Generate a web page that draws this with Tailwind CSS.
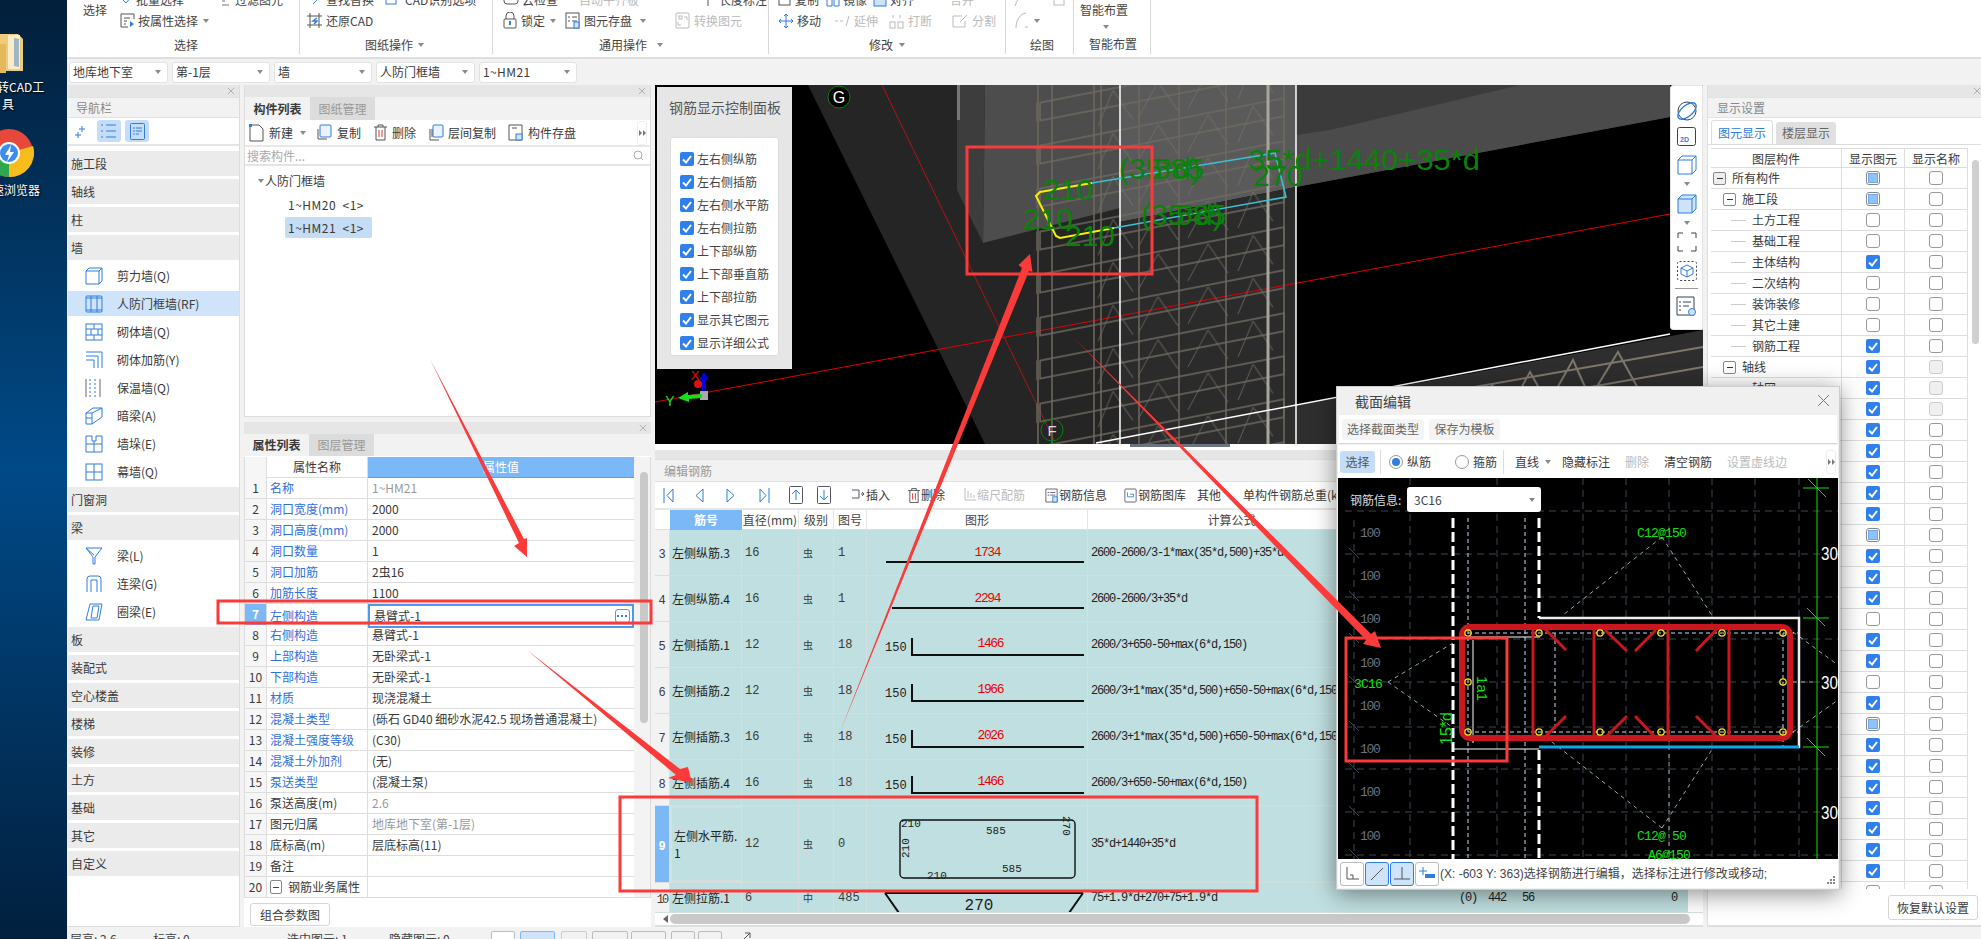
<!doctype html>
<html lang="zh"><head><meta charset="utf-8"><title>GTJ</title>
<script src="https://cdn.jsdelivr.net/npm/@tailwindcss/browser@4"></script></head>
<body class="w-[1981px] h-[939px] overflow-hidden relative flex bg-white text-[12px] leading-[14px] text-[#3a3a3a] font-[family-name:Noto_Sans_CJK_SC,sans-serif]">
<svg class="hidden" width="0" height="0"><defs>
<g id="tri"><path d="M0 0h6L3 4z" fill="#8a8a8a"/></g>
<circle id="dm" r="3.2" fill="none" stroke="#f5e020" stroke-width="1.2"/>
<symbol id="x" viewBox="0 0 9 9"><path d="M1 1l7 7M8 1L1 8" stroke="#aaa" fill="none"/></symbol>
<symbol id="ck" viewBox="0 0 14 14"><rect width="14" height="14" rx="2" fill="#2f80ed"/><path d="M3 7.5l3 3 5-6.5" stroke="#fff" stroke-width="2" fill="none"/></symbol>
<symbol id="wall" viewBox="0 0 18 18" fill="none" stroke="#2f7de1"><path d="M1 4h13v13H1zM1 4l3-3h13v13l-3 3M14 4l3-3"/></symbol>
<symbol id="rf" viewBox="0 0 18 18" fill="none" stroke="#2f7de1"><rect x="1" y="1" width="16" height="16" rx="1"/><path d="M6 1v16M12 1v16M1 3h16M1 15h16"/></symbol>
<symbol id="brick" viewBox="0 0 18 18" fill="none" stroke="#2f7de1"><rect x="1" y="1" width="16" height="16"/><path d="M1 6h16M1 12h16M9 1v5M6 6v6M13 6v6M9 12v5"/></symbol>
<symbol id="jia" viewBox="0 0 18 18" fill="none" stroke="#2f7de1"><path d="M1 1h16v16M1 5h12v12M1 9h8M9 9v8"/></symbol>
<symbol id="bao" viewBox="0 0 18 18" fill="none" stroke="#667"><path d="M1 0v18M15 0v18" /><path d="M5 0v18M10 0v18" stroke="#2f7de1" stroke-dasharray="2 2"/></symbol>
<symbol id="an" viewBox="0 0 18 18" fill="none" stroke="#2f7de1"><path d="M1 6l7-5h9v9l-10 7H1zM1 6h6v11M7 6l10-5M1 11h6"/></symbol>
<symbol id="duo" viewBox="0 0 18 18" fill="none" stroke="#2f7de1"><path d="M1 1h6v5h4V1h6v16H1zM1 9h16M9 6v11"/></symbol>
<symbol id="mu" viewBox="0 0 18 18" fill="none" stroke="#2f7de1"><rect x="1" y="1" width="16" height="16"/><path d="M9 1v16M1 9h16"/></symbol>
<symbol id="yl" viewBox="0 0 18 18" fill="none" stroke="#2f7de1"><path d="M1 1h16L10 10v7H8V10zM1 1l8 7"/></symbol>
<symbol id="ln" viewBox="0 0 18 18" fill="none" stroke="#2f7de1"><path d="M2 17V4q0-3 3-3h8q3 0 3 3v13M6 17V5h6v12"/></symbol>
<symbol id="qu" viewBox="0 0 18 18" fill="none" stroke="#2f7de1"><path d="M5 1h12l-3 16H1zM8 3h6l-2 12H6z"/></symbol>
</defs></svg>

<!-- desktop strip -->
<div class="w-[67px] shrink-0 overflow-hidden bg-gradient-to-b from-[#021f3b] via-[#004a88] to-[#01203f] text-white text-[12px] leading-[17px] [text-shadow:1px_1px_2px_#000]">
  <svg class="block mt-[32px]" width="24" height="41" viewBox="0 0 24 41"><path d="M-8 2h26l5 5v32H-8z" fill="#eccb7c"/><path d="M8 3h12v34H8z" fill="#f8eccb"/><path d="M14 6l5 1v28l-5-1z" fill="#9fb5c4"/><path d="M-8 12h14v29H-8z" fill="#e5b95b"/></svg>
  <div class="mt-[5px] whitespace-nowrap -ml-[3px]">转CAD工</div>
  <div class="pl-[2px]">具</div>
  <svg class="block mt-[17px]" width="34" height="50" viewBox="0 0 34 50"><circle cx="9" cy="24" r="24" fill="#e8473c"/><path d="M9 24L33 17A24 24 0 0 1 9 48z" fill="#f8bd1d"/><path d="M9 24L9 48A24 24 0 0 1-13 34z" fill="#2fa84f"/><circle cx="9" cy="24" r="11" fill="#fff"/><circle cx="9" cy="24" r="9" fill="#3c8df0"/><path d="M11 16l-6 10h4l-2 7 7-10h-4z" fill="#fff"/></svg>
  <div class="mt-[2px] -ml-[8px] whitespace-nowrap">速浏览器</div>
</div>

<div class="w-[1914px] flex flex-col bg-[#f2f2f2]">
  <!-- ribbon -->
  <div class="h-[59px] shrink-0 flex bg-white border-b-2 border-[#dedede] overflow-hidden text-[#444]">
    <div class="w-[233px] h-[54px] border-r border-[#d8d8d8] flex flex-col">
      <div class="flex h-[41px]">
        <div class="w-[53px] pl-[16px] pt-[3px]">选择</div>
        <div class="-mt-[10px]">
          <div class="flex h-[20px] items-center"><svg width="15" height="15" viewBox="0 0 15 15" fill="none" stroke="#2f7de1"><path d="M2 6l4 4 7-8"/></svg><span class="ml-[1px] w-[85px]">批量选择</span><svg width="12" height="12" viewBox="0 0 12 12" fill="none" stroke="#777"><path d="M1 3h3M1 7h3M1 11h7"/></svg><span class="ml-[2px]">过滤图元</span></div>
          <div class="flex h-[21px] items-center"><svg width="15" height="15" viewBox="0 0 15 15" fill="none" stroke="#555"><path d="M14 6V1H1v13h7M4 5h6M4 8h3M4 11h2"/><path d="M10 8l4 3-4 3z" fill="#2f7de1" stroke="none"/></svg><span class="ml-[3px]">按属性选择</span><svg class="ml-[5px]" width="6" height="4"><use href="#tri"/></svg></div>
        </div>
      </div>
      <div class="pl-[107px] mt-[-3px]">选择</div>
    </div>
    <div class="w-[193px] h-[54px] border-r border-[#d8d8d8] flex flex-col pl-[7px]">
      <div class="h-[20px] -mt-[10px] flex items-center"><svg width="14" height="14" viewBox="0 0 14 14" fill="none" stroke="#2f7de1"><path d="M1 2l5 5M8 1l4 4-6 6"/></svg><span class="ml-[5px] w-[59px]">查找替换</span><svg width="14" height="14" viewBox="0 0 14 14" fill="none" stroke="#2f7de1"><rect x="1" y="1" width="10" height="10"/></svg><span class="ml-[6px]">CAD识别选项</span></div>
      <div class="h-[21px] flex items-center"><svg width="15" height="15" viewBox="0 0 15 15" fill="none" stroke="#555"><path d="M0 3h15M0 12h15M3 0v15M12 0v15"/><path d="M10 5L6 8h4L7 11" stroke="#2f7de1" stroke-width="1.5"/></svg><span class="ml-[4px]">还原CAD</span></div>
      <div class="mt-[7px] pl-[58px] flex items-center">图纸操作<svg class="ml-[5px]" width="7" height="4"><use href="#tri"/></svg></div>
    </div>
    <div class="w-[276px] h-[54px] border-r border-[#d8d8d8] flex flex-col pl-[10px]">
      <div class="h-[20px] -mt-[10px] flex items-center"><svg width="16" height="14" viewBox="0 0 16 14" fill="none" stroke="#555"><rect x="1" y="1" width="14" height="10" rx="3"/></svg><span class="ml-[3px] w-[49px]">云检查</span><span class="text-[#bbb] w-[136px] pl-[8px]">自动平齐板</span><svg width="12" height="14" viewBox="0 0 12 14" fill="none" stroke="#555"><path d="M1 1v12"/></svg><span>长度标注</span></div>
      <div class="h-[21px] flex items-center"><svg width="14" height="17" viewBox="0 0 14 17" fill="none" stroke="#555"><rect x="1" y="7" width="12" height="9" rx="1"/><path d="M3 7V4a4 4 0 0 1 8 0v3"/><path d="M7 9v4" stroke="#2f7de1" stroke-width="2"/></svg><span class="ml-[4px]">锁定</span><svg class="ml-[5px]" width="6" height="4"><use href="#tri"/></svg><svg class="ml-[9px]" width="15" height="17" viewBox="0 0 15 17" fill="none" stroke="#555"><rect x="1" y="1" width="13" height="15"/><path d="M3 5h2M7 5h5M3 9h2M7 9h5"/><rect x="9" y="10" width="5" height="6" fill="#cfe4fb" stroke="#2f7de1"/></svg><span class="ml-[4px]">图元存盘</span><svg class="ml-[8px]" width="6" height="4"><use href="#tri"/></svg><svg class="ml-[29px]" width="15" height="17" viewBox="0 0 15 17" fill="none" stroke="#bbb"><rect x="1" y="1" width="13" height="15" rx="1"/><rect x="4" y="4" width="3" height="3"/><path d="M9 5h3v3M3 10v3h3"/></svg><span class="ml-[4px] text-[#bbb]">转换图元</span></div>
      <div class="mt-[7px] pl-[96px] flex items-center">通用操作<svg class="ml-[10px]" width="7" height="4"><use href="#tri"/></svg></div>
    </div>
    <div class="w-[237px] h-[54px] border-r border-[#d8d8d8] flex flex-col pl-[9px]">
      <div class="h-[20px] -mt-[10px] flex items-center"><svg width="14" height="14" viewBox="0 0 14 14" fill="none" stroke="#555"><rect x="1" y="1" width="11" height="11"/></svg><span class="ml-[3px] w-[31px]">复制</span><svg width="14" height="14" viewBox="0 0 14 14" fill="none" stroke="#2f7de1"><path d="M1 3h5v10H1zM8 3h5v10H8z"/></svg><span class="ml-[3px] w-[30px]">镜像</span><svg width="14" height="14" viewBox="0 0 14 14" fill="#cfe4fb" stroke="#2f7de1"><rect x="1" y="1" width="12" height="12"/></svg><span class="ml-[3px] w-[46px]">对齐</span><span class="text-[#bbb] pl-[14px]">合并</span></div>
      <div class="h-[21px] flex items-center text-[#bbb]"><svg width="16" height="16" viewBox="0 0 16 16" fill="none" stroke="#2f7de1"><path d="M8 1v14M1 8h14M6 3l2-2 2 2M6 13l2 2 2-2M3 6L1 8l2 2M13 6l2 2-2 2"/></svg><span class="ml-[3px] w-[38px] text-[#444]">移动</span><svg width="16" height="14" viewBox="0 0 16 14" fill="none" stroke="#bbb"><path d="M0 7h9" stroke-dasharray="3 2"/><path d="M14 2l-3 10"/></svg><span class="ml-[3px] w-[35px]">延伸</span><svg width="15" height="16" viewBox="0 0 15 16" fill="none" stroke="#bbb"><rect x="1" y="9" width="5" height="6"/><rect x="9" y="9" width="5" height="6"/><path d="M4 2v3M11 2v3"/></svg><span class="ml-[4px] w-[44px]">打断</span><svg width="17" height="14" viewBox="0 0 17 14" fill="none" stroke="#bbb"><path d="M10 2H1v11h12V7M8 8l7-7"/></svg><span class="ml-[3px]">分割</span></div>
      <div class="mt-[7px] pl-[91px] flex items-center">修改<svg class="ml-[6px]" width="7" height="4"><use href="#tri"/></svg></div>
    </div>
    <div class="w-[68px] h-[54px] border-r border-[#d8d8d8] flex flex-col pl-[8px]">
      <div class="h-[20px] -mt-[10px] flex items-center gap-[25px]"><svg width="14" height="14" viewBox="0 0 14 14" fill="none" stroke="#bbb"><path d="M1 13C3 6 7 2 13 1"/></svg><svg width="12" height="12" viewBox="0 0 12 12" fill="none" stroke="#bbb"><rect x="1" y="1" width="10" height="10"/></svg></div>
      <div class="h-[21px] flex items-center"><svg width="17" height="17" viewBox="0 0 17 17" fill="none" stroke="#bbb"><path d="M2 16C2 8 6 2 12 1M11 15h3"/></svg><svg class="ml-[3px]" width="6" height="4"><use href="#tri"/></svg></div>
      <div class="mt-[7px] pl-[16px]">绘图</div>
    </div>
    <div class="w-[77px] h-[54px] border-r border-[#d8d8d8] flex flex-col">
      <div class="pl-[6px] mt-[3px]">智能布置</div>
      <svg class="ml-[29px] mt-[8px]" width="6" height="4"><use href="#tri"/></svg>
      <div class="mt-[8px] pl-[15px]">智能布置</div>
    </div>
  </div>
  <!-- combos -->
  <div class="h-[26px] shrink-0 flex items-center pl-[2px] gap-[4px]">
    <div class="w-[99px] h-[21px] bg-white rounded-[3px] border border-[#e2e2e2] flex items-center justify-between px-[3px] pr-[6px]">地库地下室<svg width="6" height="4"><use href="#tri"/></svg></div>
    <div class="w-[98px] h-[21px] bg-white rounded-[3px] border border-[#e2e2e2] flex items-center justify-between px-[3px] pr-[6px]">第-1层<svg width="6" height="4"><use href="#tri"/></svg></div>
    <div class="w-[98px] h-[21px] bg-white rounded-[3px] border border-[#e2e2e2] flex items-center justify-between px-[3px] pr-[6px]">墙<svg width="6" height="4"><use href="#tri"/></svg></div>
    <div class="w-[99px] h-[21px] bg-white rounded-[3px] border border-[#e2e2e2] flex items-center justify-between px-[3px] pr-[6px]">人防门框墙<svg width="6" height="4"><use href="#tri"/></svg></div>
    <div class="w-[98px] h-[21px] bg-white rounded-[3px] border border-[#e2e2e2] flex items-center justify-between px-[3px] pr-[6px] tracking-[0.4px]">1~HM21<svg width="6" height="4"><use href="#tri"/></svg></div>
  </div>
  <!-- content -->
  <div class="h-[842px] shrink-0 flex gap-[4px] pl-[1px]">
    <!-- nav -->
    <div class="w-[172px] flex flex-col bg-white border-r border-b border-[#dcdcdc]">
      <div class="h-[12px] bg-[#e6e6e6] flex justify-end items-center pr-[4px]"><svg width="8" height="8"><use href="#x"/></svg></div>
      <div class="h-[21px] bg-[#f2f2f2] border-y border-[#e2e2e2] flex items-center pl-[8px] text-[#888]">导航栏</div>
      <div class="h-[28px] border-b-2 border-[#e4e4e4] flex items-center pl-[7px]">
        <svg width="10" height="13" viewBox="0 0 10 13" fill="none" stroke="#2f7de1"><path d="M7 1v6M4 4h6M3 7v6M0 10h6"/></svg>
        <span class="ml-[12px] w-[24px] h-[22px] rounded-[3px] bg-[#c5ddf6] flex items-center justify-center"><svg width="16" height="16" viewBox="0 0 16 16" fill="none" stroke="#2f7de1"><path d="M5 2h10M5 8h10M5 14h10M0 2h2M0 8h2M0 14h2"/></svg></span>
        <span class="ml-[4px] w-[24px] h-[22px] rounded-[3px] bg-[#c5ddf6] flex items-center justify-center"><svg width="15" height="17" viewBox="0 0 15 17" fill="none" stroke="#2f7de1"><rect x=".5" y=".5" width="14" height="16" rx="1"/><path d="M3 5h2M6 5h6M3 8h2M6 8h6M3 11h2M6 11h3"/></svg></span>
      </div>
      <div id="nav" class="pt-[5px]"></div>
    </div>
    <!-- middle -->
    <div class="w-[407px] flex flex-col gap-[5px]">
      <div class="h-[332px] bg-white border border-t-0 border-[#dcdcdc] flex flex-col">
        <div class="h-[12px] bg-[#e6e6e6] flex justify-end items-center pr-[4px]"><svg width="8" height="8"><use href="#x"/></svg></div>
        <div class="h-[23px] bg-[#f2f2f2] flex"><div class="w-[65px] flex items-center justify-center font-bold bg-[#f2f2f2]">构件列表</div><div class="w-[65px] flex items-center justify-center text-[#999] bg-[#dcdcdc]">图纸管理</div></div>
        <div class="h-[27px] border-b-2 border-[#e8e8e8] flex items-center pl-[4px] relative">
          <span class="w-[68px] flex items-center"><svg width="15" height="18" viewBox="0 0 15 18" fill="none" stroke="#555"><path d="M1 1h9l4 4v12H1z"/><path d="M0 0h3v3H0z" fill="#2f7de1" stroke="none"/></svg><span class="ml-[5px]">新建</span><svg class="ml-[7px]" width="6" height="4"><use href="#tri"/></svg></span>
          <span class="w-[57px] flex items-center"><svg width="15" height="17" viewBox="0 0 15 17" fill="none" stroke="#2f7de1"><rect x="3" y="1" width="11" height="12" rx="1" fill="#eaf3fe"/><path d="M1 5v10h9" stroke="#555"/></svg><span class="ml-[5px]">复制</span></span>
          <span class="w-[55px] flex items-center"><svg width="13" height="17" viewBox="0 0 13 17" fill="none" stroke="#555"><path d="M0 3h13M4 3V1h5v2M2 3v13h9V3"/><path d="M5 6v7M8 6v7" stroke="#d33"/></svg><span class="ml-[5px]">删除</span></span>
          <span class="w-[79px] flex items-center"><svg width="15" height="17" viewBox="0 0 15 17" fill="none" stroke="#2f7de1"><rect x="4" y="1" width="10" height="12" rx="1" fill="#eaf3fe"/><path d="M1 5v11h9M3 5v8" stroke="#555"/></svg><span class="ml-[4px]">层间复制</span></span>
          <span class="flex items-center"><svg width="15" height="17" viewBox="0 0 15 17" fill="none" stroke="#555"><path d="M1 1h13v15H1M1 1v15M4 4h5"/><rect x="8" y="10" width="6" height="6" fill="#cfe4fb" stroke="#2f7de1"/></svg><span class="ml-[5px]">构件存盘</span></span>
          <span class="ml-auto mr-[3px] w-[10px] h-[24px] rounded-[3px] border border-[#eee] flex items-center justify-center"><svg width="7" height="6" viewBox="0 0 7 6" fill="#777"><path d="M0 0l3 3-3 3zM4 0l3 3-3 3z"/></svg></span>
        </div>
        <div class="h-[19px] border-b-2 border-[#e4e4e4] flex items-center justify-between pl-[2px] pr-[6px] text-[#aaa]">搜索构件...<svg width="11" height="11" viewBox="0 0 11 11" fill="none" stroke="#aaa"><circle cx="5" cy="5" r="4"/><path d="M8 8l2 2"/></svg></div>
        <div class="pl-[13px] pt-[8px]">
          <div class="h-[14px] flex items-center"><svg width="6" height="4"><use href="#tri"/></svg><span class="ml-[1px]">人防门框墙</span></div>
          <div class="h-[14px] mt-[10px] pl-[30px] tracking-[0.5px] whitespace-pre">1~HM20  &lt;1&gt;</div>
          <div class="h-[21px] mt-[5px] ml-[27px] w-[87px] rounded-[2px] bg-[#c5dcf5] flex items-center pl-[3px] tracking-[0.5px] whitespace-pre">1~HM21  &lt;1&gt;</div>
        </div>
      </div>
      <div class="flex-1 bg-white flex flex-col">
        <div class="h-[12px] bg-[#e6e6e6] flex justify-end items-center pr-[4px]"><svg width="8" height="8"><use href="#x"/></svg></div>
        <div class="h-[22px] bg-[#f2f2f2] flex"><div class="w-[65px] flex items-center justify-center font-bold">属性列表</div><div class="w-[65px] flex items-center justify-center text-[#999] bg-[#dcdcdc]">图层管理</div></div>
        <div class="flex h-[441px] border-l border-r border-b border-[#dcdcdc] mt-[1px]">
          <div class="w-[389px]">
            <div class="grid grid-cols-[22px_101px_266px] h-[21px] border-b border-[#ddd] text-center leading-[20px]"><span class="border-r border-[#ddd] bg-[#f6f6f6]"></span><span class="border-r border-[#ddd]">属性名称</span><span class="bg-[#7ab8f8] text-white border-b border-[#5b9fe8]">属性值</span></div>
            <div id="props"></div>
          </div>
          <div class="flex-1 bg-[#f3f3f3] pt-[15px]"><div class="ml-[6px] w-[8px] h-[251px] rounded-[4px] bg-[#c9c9c9]"></div></div>
        </div>
        <div class="pl-[6px] pt-[5px]"><span class="inline-flex w-[80px] h-[23px] items-center justify-center bg-white border border-[#d6d6d6] rounded-[3px]">组合参数图</span></div>
      </div>
    </div>
    <!-- center -->
    <div class="w-[1048px] flex flex-col">
      <div class="h-[359px] relative bg-black shrink-0">
        <svg class="block" width="1048" height="359" viewBox="655 85 1048 359">
          <defs>
            <pattern id="cage" patternUnits="userSpaceOnUse" width="248" height="43" patternTransform="translate(1038 9) skewY(-11)">
              <path d="M2 8h244v18H2z" fill="none" stroke="#6f695f" stroke-width="1.4"/>
              <path d="M60 43L75 10 95 43M100 43L120 10 140 43M150 43L170 10 190 43M200 43L215 10 235 43" fill="none" stroke="#77736a" stroke-width=".8"/>
            </pattern>
          </defs>
          <rect x="655" y="85" width="1048" height="359" fill="#000"/>
          <path d="M808 85H1120V444H985z" fill="#252525"/>
          <path d="M1120 85H1296V187L1120 222z" fill="#5a5a5a"/>
          <path d="M1120 222L1296 187V444H1120z" fill="#2b2b2b"/>
          <path d="M1296 85H1670V117L1296 187z" fill="#3b3b3b"/>
          <path d="M1330 130L1520 85H1670V117L1296 187V135z" fill="#4b4b4b"/>
          <path d="M985 85H1120V208L983 243z" fill="#4d4d4d"/>
          <path d="M957 85H985L983 243 957 190z" fill="#3d3d3d"/>
          <path d="M957 85h3v35h-3z" fill="#777"/>
          <path d="M1090 444L1703 330V444z" fill="#2e2e2e"/>
          <path d="M882 85L1054 440" stroke="#b01515" stroke-width="1"/>
          <path d="M655 402L1670 214" stroke="#e00000" stroke-width="1"/>
          <rect x="1036" y="85" width="250" height="359" fill="url(#cage)"/>
          <path d="M1038 85V444M1052 85V444M1094 85V444M1101 85V444M1139 85V444M1179 85V444M1226 85V444M1284 85V444" stroke="#6f695f" stroke-width="1.5"/>
          <path d="M1268 85V444" stroke="#a8a59c" stroke-width="3"/>
          <path d="M1120 85V444M1296 85V444" stroke="#fff" stroke-width="1.5"/>
          <path d="M1096 443L1670 334" stroke="#fff" stroke-width="1.5"/>
          <path d="M1370 426L1703 367M1400 400L1703 347M1480 412L1492 385 1510 408 1530 372 1548 404 1573 360 1590 398 1618 352 1640 392" fill="none" stroke="#7f776c" stroke-width="2"/>
          <path d="M1092 183L1275 153 1286 197 1114 228" fill="none" stroke="#3bc2d0" stroke-width="1.6"/>
          <path d="M1092 183L1040 192 1036 196 1056 236 1060 238 1114 228" fill="none" stroke="#f2f200" stroke-width="2"/>
          <g fill="#0a820a" font-family="Liberation Sans" font-size="30">
            <text x="1043" y="200">210</text><text x="1023" y="229">210</text><text x="1065" y="246">210</text>
            <text x="1119" y="179">(35*d)</text><text x="1154" y="179">585</text>
            <text x="1141" y="225">(35*d)</text><text x="1176" y="225">585</text>
            <text x="1248" y="170" textLength="232" lengthAdjust="spacingAndGlyphs">35*d+1440+35*d</text>
            <text x="1253" y="186">270</text>
          </g>
          <circle cx="839" cy="97" r="11" fill="#000" stroke="#0a820a" stroke-width="1"/><text x="839" y="103" text-anchor="middle" fill="#fff" font-size="16" font-family="Liberation Sans">G</text>
          <circle cx="1052" cy="430" r="11" fill="none" stroke="#0a820a"/><text x="1052" y="436" text-anchor="middle" fill="#ddd" font-size="15" font-family="Liberation Sans">F</text>
          <path d="M704 372l-5 8h3v12h4v-12h3z" fill="#0000e0"/><circle cx="698" cy="384" r="4" fill="#e01010"/><rect x="700" y="391" width="8" height="9" fill="#aaa"/>
          <path d="M702 394l-14 1v-3l-10 6 11 4v-3l13-1z" fill="#18e018"/>
          <text x="695" y="380" fill="#e01010" font-size="13" font-family="Liberation Sans" text-anchor="middle">X</text>
          <text x="670" y="406" fill="#18e018" font-size="14" font-family="Liberation Sans" text-anchor="middle">Y</text>
        </svg>
        <!-- floating control panel -->
        <div class="absolute left-[2px] top-[2px] w-[135px] h-[282px] bg-[#e6e6e6] pl-[13px]">
          <div class="text-[14px] leading-[20px] text-[#555] pt-[10px] -ml-[1px] whitespace-nowrap">钢筋显示控制面板</div>
          <div id="rebarChk" class="mt-[20px] w-[109px] h-[219px] bg-white rounded-[3px] border border-[#dcdcdc] pl-[9px] pt-[9px]"></div>
        </div>
        <!-- floating view toolbar -->
        <div class="absolute right-0 top-0 w-[33px] h-[245px] bg-white rounded-l-[3px] border border-[#e4e4e4] flex flex-col items-center pt-[13px]">
          <svg width="22" height="24" viewBox="0 0 22 24" fill="none"><circle cx="11" cy="12" r="9" stroke="#345"/><ellipse cx="11" cy="12" rx="11" ry="5.5" transform="rotate(-40 11 12)" stroke="#2f7de1" stroke-width="1.4"/></svg>
          <svg class="mt-[4px]" width="19" height="19" viewBox="0 0 19 19" fill="none" stroke="#345"><rect x=".5" y=".5" width="18" height="18" rx="2"/><text x="3" y="15" font-size="7" fill="#2f7de1" stroke="none" font-weight="bold" font-family="Liberation Sans">2D</text></svg>
          <svg class="mt-[9px]" width="20" height="20" viewBox="0 0 20 20" fill="none" stroke="#2f7de1"><path d="M1 5h14v14H1zM1 5l4-4h14v14l-4 4M15 5l4-4" /></svg>
          <svg class="mt-[7px]" width="6" height="4"><use href="#tri"/></svg>
          <svg class="mt-[8px]" width="20" height="20" viewBox="0 0 20 20" fill="#cfe4fb" stroke="#2f7de1"><path d="M1 5h14v14H1zM1 5l4-4h14v14l-4 4M15 5l4-4"/></svg>
          <svg class="mt-[7px]" width="6" height="4"><use href="#tri"/></svg>
          <svg class="mt-[7px]" width="20" height="20" viewBox="0 0 20 20" fill="none" stroke="#345"><path d="M1 6V1h5M14 1h5v5M19 14v5h-5M6 19H1v-5"/></svg>
          <svg class="mt-[9px]" width="20" height="20" viewBox="0 0 20 20" fill="none"><rect x=".5" y=".5" width="19" height="19" rx="2" stroke="#345" stroke-dasharray="2 2"/><path d="M10 4l6 3v6l-6 3-6-3V7zM10 10v6M4 7l6 3 6-3" stroke="#2f7de1"/></svg>
          <div class="w-[23px] h-px bg-[#999] mt-[7px]"></div>
          <svg class="mt-[7px]" width="21" height="20" viewBox="0 0 21 20" fill="none" stroke="#345"><path d="M1 1h17v18H1zM3 6h2M7 6h8M3 10h2M7 10h6M3 14h2"/><circle cx="16" cy="16" r="3.5" fill="#cfe4fb" stroke="#2f7de1"/></svg>
        </div>
      </div>
      <div class="h-[6px] shrink-0 bg-white relative"><div class="ml-[475px] w-[100px] h-[3px] bg-[#6b7480]"></div></div>
      <!-- rebar panel -->
      <div class="flex-1 bg-white flex flex-col border-b-2 border-[#dedede] overflow-hidden">
        <div class="h-[9px] bg-[#e6e6e6]"></div>
        <div class="h-[23px] bg-[#f2f2f2] border-y border-[#e0e0e0] flex items-center pl-[9px] text-[#999]">编辑钢筋</div>
        <div class="h-[28px] border-b-2 border-[#e6e6e6] flex items-center pl-[8px] whitespace-nowrap">
          <span class="w-[32px]"><svg width="11" height="15" viewBox="0 0 11 15" fill="none" stroke="#2f7de1"><path d="M1 0v15M10 1L4 7.5l6 6.5z"/></svg></span>
          <span class="w-[31px]"><svg width="9" height="15" viewBox="0 0 9 15" fill="none" stroke="#2f7de1"><path d="M8 1L1 7.5 8 14z"/></svg></span>
          <span class="w-[33px]"><svg width="9" height="15" viewBox="0 0 9 15" fill="none" stroke="#2f7de1"><path d="M1 1l7 6.5L1 14z"/></svg></span>
          <span class="w-[30px]"><svg width="11" height="15" viewBox="0 0 11 15" fill="none" stroke="#2f7de1"><path d="M10 0v15M1 1l6 6.5L1 14z"/></svg></span>
          <span class="w-[28px]"><svg width="14" height="18" viewBox="0 0 14 18" fill="none" stroke="#2f7de1"><rect x=".5" y=".5" width="13" height="17" rx="1" stroke="#556"/><path d="M7 14V4M3 8l4-4 4 4"/></svg></span>
          <span class="w-[35px]"><svg width="14" height="18" viewBox="0 0 14 18" fill="none" stroke="#2f7de1"><rect x=".5" y=".5" width="13" height="17" rx="1" stroke="#556"/><path d="M7 4v10M3 10l4 4 4-4"/></svg></span>
          <span class="w-[56px] flex items-center gap-[2px]"><svg width="12" height="14" viewBox="0 0 12 14" fill="none" stroke="#556"><path d="M0 2h7v8H0M9 6h3M10 4l2 2-2 2" /></svg>插入</span>
          <span class="w-[56px] flex items-center gap-[1px]"><svg width="12" height="17" viewBox="0 0 13 17" fill="none" stroke="#555"><path d="M0 3h13M4 3V1h5v2M2 3v13h9V3"/><path d="M5 6v7M8 6v7" stroke="#d33"/></svg>删除</span>
          <span class="w-[81px] flex items-center gap-[1px] text-[#bbb]"><svg width="12" height="14" viewBox="0 0 12 14" fill="none" stroke="#bbb"><path d="M1 0v12h11M4 3v7M7 5v5M10 7v3"/></svg>缩尺配筋</span>
          <span class="w-[79px] flex items-center gap-[1px]"><svg width="13" height="15" viewBox="0 0 15 17" fill="none" stroke="#556"><path d="M1 1h13v15H1zM3 5h2M6 5h6M3 8h2M6 8h6"/><rect x="9" y="10" width="5" height="6" fill="#cfe4fb" stroke="#2f7de1"/></svg>钢筋信息</span>
          <span class="w-[73px] flex items-center gap-[1px]"><svg width="13" height="15" viewBox="0 0 15 17" fill="none" stroke="#556"><rect x="1" y="1" width="13" height="15" rx="1"/><path d="M4 5v5h7V7H7" stroke="#2f7de1"/></svg>钢筋图库</span>
          <span class="w-[46px]">其他</span>
          <span>单构件钢筋总重(kg):</span>
        </div>
        <div class="grid grid-cols-[15px_72px_57px_35px_33px_221px_288px] h-[20px] border-b border-[#ddd] text-center leading-[20px] text-[#444] whitespace-nowrap"><span></span><span class="bg-[#7ab8f8] text-white font-bold">筋号</span><span class="border-r border-[#e4e4e4]">直径(mm)</span><span class="border-r border-[#e4e4e4]">级别</span><span class="border-r border-[#e4e4e4]">图号</span><span class="border-r border-[#e4e4e4]">图形</span><span class="border-r border-[#e4e4e4]">计算公式</span></div>
        <div id="rebar"></div>
        <div class="h-[12px] flex items-center pl-[8px]"><svg width="5" height="8" viewBox="0 0 5 8" fill="#666"><path d="M5 0L0 4l5 4z"/></svg><div class="ml-[2px] w-[1020px] h-[10px] rounded-[5px] bg-[#c9c9c9]"></div></div>
      </div>
    </div>
    <!-- right panel -->
    <div class="w-[274px] flex flex-col bg-white border-b-2 border-l border-[#dedede]">
      <div class="h-[12px] bg-[#e6e6e6] flex justify-end items-center"><svg width="8" height="8"><use href="#x"/></svg></div>
      <div class="h-[21px] bg-[#f2f2f2] border-y border-[#e2e2e2] flex items-center pl-[9px] text-[#888]">显示设置</div>
      <div class="h-[27px] flex items-end pl-[3px] gap-[3px] border-b border-[#ddd]"><div class="w-[62px] h-[24px] bg-white border border-b-0 border-[#ddd] rounded-t-[3px] flex items-center justify-center text-[#2f7de1]">图元显示</div><div class="w-[60px] h-[22px] bg-[#e0e0e0] rounded-t-[3px] flex items-center justify-center text-[#666]">楼层显示</div></div>
      <div class="relative flex-1 overflow-hidden pl-[3px] pt-[3px]">
        <div class="grid grid-cols-[131px_63px_63px] h-[20px] w-[257px] border-y border-[#ddd] text-center leading-[19px]"><span class="border-r border-[#ddd]">图层构件</span><span class="border-r border-[#ddd]">显示图元</span><span class="border-r border-[#ddd]">显示名称</span></div>
        <div id="layers" class="h-[721px] overflow-hidden"></div>
        <div class="absolute right-[2px] top-[15px] w-[7px] h-[184px] rounded-[4px] bg-[#d0d0d0]"></div>
        <div class="absolute right-[3px] top-[750px] w-[90px] h-[25px] bg-white border border-[#d6d6d6] rounded-[3px] flex items-center justify-center">恢复默认设置</div>
      </div>
    </div>
  </div>
  <!-- status -->
  <div class="flex-1 flex overflow-hidden items-start pt-[4px] whitespace-nowrap text-[#444]"><span class="ml-[3px] w-[83px] pt-[1px]">层高: 2.6</span><span class="w-[134px] pt-[1px]">标高: 0</span><span class="w-[102px] pt-[1px]">选中图元: 1</span><span class="w-[102px] pt-[1px]">隐藏图元: 0</span>
    <span class="w-[24px] h-[14px] border border-[#bbb] rounded-[2px] bg-white"></span><span class="w-[35px] h-[14px] border border-[#7ab8f8] bg-[#cfe4fb] rounded-[2px] ml-[5px]"></span><span class="w-[26px] h-[14px] border border-[#ccc] rounded-[2px] ml-[6px]"></span><span class="w-[36px] h-[14px] border border-[#bbb] rounded-[2px] ml-[5px]"></span><span class="w-[35px] h-[14px] border border-[#bbb] rounded-[2px] ml-[3px]"></span><span class="w-[24px] h-[14px] border border-[#bbb] rounded-[2px] ml-[5px]"></span><span class="w-[24px] h-[14px] border border-[#bbb] rounded-[2px] ml-[3px]"></span><svg class="ml-[20px]" width="10" height="10" viewBox="0 0 10 10" fill="none" stroke="#555"><path d="M1 9l7-7M3 2h5v5"/></svg>
  </div>
</div>

<!-- floating dialog -->
<div class="absolute left-[1336px] top-[386px] w-[504px] h-[504px] bg-[#f0f0f0] shadow-[0_4px_22px_rgba(0,0,0,0.45)] border border-[#ccc] flex flex-col z-20">
  <div class="h-[27px] shrink-0 flex items-center justify-between pl-[18px] pr-[10px] text-[14px] text-[#444]">截面编辑<svg width="11" height="11" viewBox="0 0 11 11" fill="none" stroke="#777"><path d="M0 0l11 11M11 0L0 11"/></svg></div>
  <div class="h-[29px] shrink-0 mx-[2px] mt-px bg-white flex items-center pl-[3px] gap-[5px] text-[#666] border-b border-[#d6d6d6]">
    <span class="w-[82px] h-[21px] bg-[#f4f4f4] rounded-[3px] flex items-center justify-center">选择截面类型</span><span class="w-[71px] h-[21px] bg-[#f4f4f4] rounded-[3px] flex items-center justify-center">保存为模板</span></div>
  <div class="h-[33px] shrink-0 mx-[1px] mt-px bg-white flex items-center pl-[2px] whitespace-nowrap">
    <span class="w-[35px] h-[22px] bg-[#c5ddf6] rounded-[3px] flex items-center justify-center text-[#555]">选择</span>
    <span class="w-px h-[24px] bg-[#ddd] ml-[5px]"></span>
    <span class="w-[14px] h-[14px] rounded-full border border-[#999] ml-[8px] flex items-center justify-center"><span class="w-[8px] h-[8px] rounded-full bg-[#2f7de1]"></span></span><span class="ml-[4px] w-[48px]">纵筋</span>
    <span class="w-[14px] h-[14px] rounded-full border border-[#999]"></span><span class="ml-[4px] w-[24px]">箍筋</span>
    <span class="w-px h-[24px] bg-[#ddd] ml-[6px]"></span>
    <span class="ml-[11px] w-[47px] flex items-center">直线<svg class="ml-[6px]" width="6" height="4"><use href="#tri"/></svg></span>
    <span class="w-[63px]">隐藏标注</span><span class="w-[39px] text-[#bbb]">删除</span><span class="w-[63px]">清空钢筋</span><span class="w-[99px] text-[#bbb]">设置虚线边</span>
    <span class="w-[10px] h-[24px] rounded-[3px] border border-[#eee] flex items-center justify-center"><svg width="7" height="6" viewBox="0 0 7 6" fill="#777"><path d="M0 0l3 3-3 3zM4 0l3 3-3 3z"/></svg></span>
  </div>
  <div class="h-[381px] shrink-0 mx-[1px] bg-black relative overflow-hidden">
    <svg class="block" width="501" height="381" viewBox="1338 478 501 381">
      <g stroke="#3d4552" stroke-dasharray="7 5" fill="none"><path d="M1354 520V859M1410 478V859M1497 478V859M1583 478V859M1626 478V859M1669 478V859M1712 478V859M1755 478V859M1799 478V859M1345 511H1839M1345 554H1839M1345 597H1839M1345 639H1839M1345 682H1839M1345 727H1839M1345 769H1839M1345 812H1839M1345 855H1839"/></g>
      <g stroke="#3d4552"><path d="M1349 548l10 10M1349 591l10 10M1349 633l10 10M1349 676l10 10M1349 721l10 10M1349 763l10 10M1349 806l10 10M1349 849l10 10"/></g>
      <g stroke="#9aa" stroke-dasharray="4 4" fill="none" stroke-width="1"><path d="M1388 682L1453 643M1388 682L1452 727M1662 537L1563 615M1662 537L1713 617M1662 828L1543 735M1662 828L1713 748M1793 632L1838 665M1793 732L1838 700M1793 682H1817M1669 730V859"/></g>
      <g stroke="#c7d8ef" stroke-dasharray="4 3" fill="none"><path d="M1468 518V859M1525 518V859M1555 633V733M1783 633V747M1468 633H1799M1468 732H1799"/></g>
      <path d="M1453 518V859M1539 518V618M1539 750V859" stroke="#fff" stroke-width="3" stroke-dasharray="10 4" fill="none"/>
      <path d="M1539 618H1799V748" stroke="#eee" stroke-width="2.5" fill="none"/>
      <path d="M1453 749H1539M1468 637H1540M1473 640V743" stroke="#fff" fill="none"/>
      <path d="M1539 747H1799" stroke="#0ea5e9" stroke-width="3"/>
      <rect x="1462" y="627" width="328" height="111" rx="8" fill="none" stroke="#c8171e" stroke-width="6"/>
      <path d="M1533 627V738M1594 627V738M1668 627V738M1729 627V738" stroke="#c8171e" stroke-width="3"/>
      <path d="M1545 629L1566 650M1605 630L1627 651M1656 630L1635 651M1718 628L1696 651M1566 716L1545 737M1627 716L1606 737M1635 716L1655 737M1696 716L1717 737" stroke="#c8171e" stroke-width="3"/>
      <g><use href="#dm" x="1468" y="633"/><use href="#dm" x="1539" y="633"/><use href="#dm" x="1600" y="633"/><use href="#dm" x="1661" y="633"/><use href="#dm" x="1722" y="633"/><use href="#dm" x="1783" y="633"/><use href="#dm" x="1468" y="732"/><use href="#dm" x="1539" y="732"/><use href="#dm" x="1600" y="732"/><use href="#dm" x="1661" y="732"/><use href="#dm" x="1722" y="732"/><use href="#dm" x="1783" y="732"/><use href="#dm" x="1468" y="682"/><use href="#dm" x="1783" y="682"/></g>
      <path d="M1817 478V859M1803 488H1829M1803 618H1829M1803 747H1829M1808 479l18 18M1807 608l18 18M1807 738l18 18" stroke="#10e010" fill="none"/>
      <g font-family="Liberation Sans" font-size="18" fill="#fff"><text x="1821" y="560" textLength="17" lengthAdjust="spacingAndGlyphs">30</text><text x="1821" y="689" textLength="17" lengthAdjust="spacingAndGlyphs">30</text><text x="1821" y="819" textLength="17" lengthAdjust="spacingAndGlyphs">30</text></g>
      <g font-family="Liberation Mono" font-size="13" fill="#6b7280" letter-spacing="-1.3"><text x="1360" y="537">100</text><text x="1360" y="580">100</text><text x="1360" y="623">100</text><text x="1360" y="667">100</text><text x="1360" y="710">100</text><text x="1360" y="753">100</text><text x="1360" y="796">100</text><text x="1360" y="840">100</text></g>
      <g font-family="Liberation Mono" font-size="13" fill="#10e010" letter-spacing="-0.8"><text x="1637" y="537">C12@150</text><text x="1637" y="840">C12@ 50</text><text x="1648" y="859">A6@150</text><text x="1354" y="688">3C16</text></g>
      <text transform="translate(1452 745) rotate(-90)" font-family="Liberation Sans" font-size="16" fill="#10e010">15*d</text>
      <text transform="translate(1477 676) rotate(90)" font-family="Liberation Sans" font-size="15" fill="#10e010">1a1</text>
    </svg>
    <div class="absolute left-[12px] top-[9px] flex items-center text-[#ddd] whitespace-nowrap"><span class="w-[57px]">钢筋信息:</span><span class="w-[134px] h-[25px] bg-white rounded-[3px] flex items-center justify-between pl-[7px] pr-[6px] text-[#444]">3C16<svg width="6" height="4"><use href="#tri"/></svg></span></div>
  </div>
  <div class="h-[29px] shrink-0 mx-[1px] bg-white flex items-center pl-[2px] whitespace-nowrap text-[#444] relative">
    <span class="w-[24px] h-[24px] border border-[#bbb] rounded-[3px] flex items-center justify-center"><svg width="14" height="14" viewBox="0 0 14 14" fill="none" stroke="#555"><path d="M2 0v12h12M5 8h3v4"/></svg></span>
    <span class="w-[24px] h-[24px] border border-[#2f7de1] bg-[#cfe4fb] rounded-[3px] flex items-center justify-center ml-px"><svg width="14" height="14" viewBox="0 0 14 14" stroke="#555"><path d="M1 13L13 1"/></svg></span>
    <span class="w-[24px] h-[24px] border border-[#2f7de1] bg-[#cfe4fb] rounded-[3px] flex items-center justify-center ml-px"><svg width="16" height="14" viewBox="0 0 16 14" stroke="#555"><path d="M8 0v12M0 12h16"/></svg></span>
    <span class="w-[24px] h-[24px] border border-[#bbb] rounded-[3px] flex items-center justify-center ml-px"><svg width="16" height="14" viewBox="0 0 16 14" fill="none"><path d="M4 0v8M0 4h8" stroke="#2f7de1"/><rect x="6" y="7" width="10" height="4" fill="#2f7de1"/></svg></span>
    <span class="ml-[1px] font-[family-name:Liberation_Sans,Noto_Sans_CJK_SC,sans-serif]">(X: -603 Y: 363)选择钢筋进行编辑，选择标注进行修改或移动;</span>
    <svg class="absolute right-[3px] bottom-[4px]" width="8" height="8" viewBox="0 0 8 8" fill="#888"><path d="M6 0h2v2H6zM3 3h2v2H3zM6 3h2v2H6zM0 6h2v2H0zM3 6h2v2H3zM6 6h2v2H6z"/></svg>
  </div>
</div>

<!-- annotations -->
<svg class="absolute left-0 top-0 z-30 pointer-events-none" width="1981" height="939" viewBox="0 0 1981 939">
  <g fill="none" stroke="#fb3a3a" stroke-width="3">
    <rect x="967" y="147" width="185" height="127"/>
    <rect x="218" y="601" width="433" height="22"/>
    <rect x="620" y="797" width="637" height="94"/>
    <rect x="1346" y="638" width="161" height="123"/>
  </g>
  <g fill="#fb3a3a">
    <path d="M430 359L524 539 527 538V557L514 546 519 543z"/>
    <path d="M527 650L680 769 688 767 692 783 668 778 676 775z"/>
    <path d="M840 732L1022 268 1018.6 265 1030 254 1032.5 272 1029 271z"/>
    <path d="M1076 340L1366 640 1363 644 1381 648 1375 631 1371 634z"/>
  </g>
</svg>

<script>
const NAV=[['g','施工段'],['g','轴线'],['g','柱'],['g','墙'],['i','剪力墙(Q)','wall'],['s','人防门框墙(RF)','rf'],['i','砌体墙(Q)','brick'],['i','砌体加筋(Y)','jia'],['i','保温墙(Q)','bao'],['i','暗梁(A)','an'],['i','墙垛(E)','duo'],['i','幕墙(Q)','mu'],['g','门窗洞'],['g','梁'],['i','梁(L)','yl'],['i','连梁(G)','ln'],['i','圈梁(E)','qu'],['g','板'],['g','装配式'],['g','空心楼盖'],['g','楼梯'],['g','装修'],['g','土方'],['g','基础'],['g','其它'],['g','自定义']];
document.getElementById('nav').innerHTML=NAV.map(([t,n,ic])=>t=='g'
 ?`<div class="h-[25px] mb-[3px] bg-[#ebebeb] flex items-center pl-[3px]">${n}</div>`
 :`<div class="h-[25px] mb-[3px] flex items-center pl-[17px] ${t=='s'?'bg-[#cfe4fb]':''}"><svg width="18" height="18"><use href="#${ic}"/></svg><span class="ml-[14px]">${n}</span></div>`).join('');

const P=[['名称','1~HM21',1,1],['洞口宽度(mm)','2000',1],['洞口高度(mm)','2000',1],['洞口数量','1',1],['洞口加筋','2虫16',1],['加筋长度','1100',1],['左侧构造','悬臂式-1',1,0,1],['右侧构造','悬臂式-1',1],['上部构造','无卧梁式-1',1],['下部构造','无卧梁式-1',1],['材质','现浇混凝土',1],['混凝土类型','(砾石 GD40 细砂水泥42.5  现场普通混凝土)',1],['混凝土强度等级','(C30)',1],['混凝土外加剂','(无)',1],['泵送类型','(混凝土泵)',1],['泵送高度(m)','2.6',0,1],['图元归属','地库地下室(第-1层)',0,1],['底标高(m)','层底标高(11)',0],['备注','',0],['钢筋业务属性','',0,0,0,1]];
document.getElementById('props').innerHTML=P.map(([n,v,b,g,s,e],i)=>`<div class="grid grid-cols-[22px_101px_266px] h-[21px] border-b border-[#ddd] leading-[20px] whitespace-nowrap">
<span class="border-r border-[#ddd] text-center ${s?'bg-[#7ab8f8] text-white font-bold':'bg-[#f6f6f6]'}">${i+1}</span>
<span class="border-r border-[#ddd] pl-[3px] flex items-center ${b?'text-[#2f6fe0]':''}">${e?'<span class="w-[12px] h-[14px] rounded-[2px] border border-[#888] flex items-center justify-center mr-[6px]"><span class="w-[6px] h-px bg-[#444]"></span></span>':''}${n}</span>
<span class="pl-[4px] flex items-center justify-between ${g?'text-[#999]':''} ${s?'border-2 border-[#4a9af0] pl-[3px] pr-[2px]':''}">${v}${s?'<span class="w-[15px] h-[14px] rounded-[3px] border border-[#4a9af0] flex items-center justify-center"><svg width="11" height="3" viewBox="0 0 11 3" fill="#2f7de1"><rect width="2" height="2"/><rect x="4" width="2" height="2"/><rect x="8" width="2" height="2"/></svg></span>':''}</span></div>`).join('');

const C=['左右侧纵筋','左右侧插筋','左右侧水平筋','左右侧拉筋','上下部纵筋','上下部垂直筋','上下部拉筋','显示其它图元','显示详细公式'];
document.getElementById('rebarChk').innerHTML=C.map(n=>`<div class="h-[23px] flex items-center whitespace-nowrap text-[#444]"><svg width="14" height="14"><use href="#ck"/></svg><span class="ml-[3px]">${n}</span></div>`).join('');

const m='font-[family-name:Liberation_Mono,Noto_Sans_CJK_SC,monospace]';
const red=(x,y,t)=>`<text x="${x}" y="${y}" text-anchor="middle" fill="#e00" font-family="Liberation Mono" font-size="13" textLength="27">${t}</text>`;
const li=(a,t)=>`<svg width="221" height="46">${red(121,26,t)}<path d="M${a} 32H217" stroke="#111" stroke-width="2"/></svg>`;
const el=t=>`<svg width="221" height="46">${red(124,25,t)}<text x="18" y="29" font-family="Liberation Mono" font-size="12" fill="#222">150</text><path d="M45 16V33H217" stroke="#111" stroke-width="2" fill="none"/></svg>`;
const R=[[3,'左侧纵筋.3','16','虫','1',li(19,'1734'),'2600-2600/3-1*max(35*d,500)+35*d',46],
[4,'左侧纵筋.4','16','虫','1',li(25,'2294'),'2600-2600/3+35*d',46],
[5,'左侧插筋.1','12','虫','18',el('1466'),'2600/3+650-50+max(6*d,150)',46],
[6,'左侧插筋.2','12','虫','18',el('1966'),'2600/3+1*max(35*d,500)+650-50+max(6*d,150)',46],
[7,'左侧插筋.3','16','虫','18',el('2026'),'2600/3+1*max(35*d,500)+650-50+max(6*d,150)',46],
[8,'左侧插筋.4','16','虫','18',el('1466'),'2600/3+650-50+max(6*d,150)',46],
[9,'左侧水平筋.<br>1','12','虫','0',`<svg width="221" height="77" font-family="Liberation Mono" font-size="11" fill="#222"><rect x="33" y="14" width="175" height="58" rx="4" fill="none" stroke="#111" stroke-width="1.4"/><text x="34" y="21">210</text><text x="119" y="28">585</text><text x="135" y="66">585</text><text x="60" y="73">210</text><text transform="translate(196 10) rotate(90)">270</text><text transform="translate(42 52) rotate(-90)">210</text></svg>`,'35*d+1440+35*d',77],
[10,'左侧拉筋.1','6','中','485',`<svg width="221" height="30"><path d="M18 10L32 30M216 10L202 30M18 10H216" stroke="#111" stroke-width="2" fill="none"/><text x="112" y="27" text-anchor="middle" font-family="Liberation Mono" font-size="16" fill="#222">270</text></svg>`,'75+1.9*d+270+75+1.9*d',30]];
document.getElementById('rebar').innerHTML=R.map(([i,n,d,g,t,s,f,h])=>`<div class="grid grid-cols-[15px_72px_57px_35px_33px_221px_600px] border-b border-[#d4e0e0] whitespace-nowrap ${h==46?'h-[46px]':h==77?'h-[77px]':'h-[30px]'}">
<span class="flex items-center justify-center pt-[5px] border-r border-[#e0e0e0] ${i==9?'bg-[#7ab8f8] text-white font-bold':'bg-[#f2f2f2]'} ${m} ${i==10?'tracking-[-2px]':''}">${i}</span>
<span class="bg-[#c0dfe0] flex items-center pl-[2px] text-[12px] text-[#222] border-r border-[#d4e0e0] ${i==9?'border-2 border-[#777] leading-[17px]':''}">${n}</span>
<span class="bg-[#c0dfe0] flex items-center pl-[3px] border-r border-[#d4e0e0] ${m}">${d}</span>
<span class="bg-[#c0dfe0] flex items-center pl-[4px] border-r border-[#d4e0e0] text-[10px]">${g}</span>
<span class="bg-[#c0dfe0] flex items-center pl-[4px] border-r border-[#d4e0e0] ${m}">${t}</span>
<span class="bg-[#c0dfe0] border-r border-[#d4e0e0] overflow-hidden">${s}</span>
<span class="bg-[#c0dfe0] flex items-center pl-[3px] text-[#222] ${m} tracking-[-1.2px] overflow-hidden">${i==10?`<span class="w-[368px]">${f}</span><span class="w-[29px]">(0)</span><span class="w-[34px]">442</span><span class="w-[149px]">56</span><span>0</span>`:f}</span></div>`).join('');

const L=[['所有构件',0,2,0],['施工段',1,2,0],['土方工程',2,0,0],['基础工程',2,0,0],['主体结构',2,1,0],['二次结构',2,0,0],['装饰装修',2,0,0],['其它土建',2,0,0],['钢筋工程',2,1,0],['轴线',1,1,3],['轴网',2,1,3],['',2,1,3],['',2,1,0],['',2,1,0],['',2,1,0],['',2,1,0],['',2,1,0],['',2,2,0],['',2,1,0],['',2,1,0],['',2,1,0],['',2,0,0],['',2,1,0],['',2,1,0],['',2,0,0],['',2,1,0],['',2,2,0],['',2,1,0],['',2,1,0],['',2,1,0],['',2,1,0],['',2,1,0],['',2,1,0],['',2,1,0],['',2,0,0]];
const cb=s=>s==1?'<svg width="14" height="14"><use href="#ck"/></svg>':s==2?'<span class="w-[14px] h-[14px] rounded-[3px] border border-[#888] bg-white p-[1px] flex"><span class="flex-1 bg-[#8fc3fb] border border-[#6aa8ef]"></span></span>':s==3?'<span class="w-[14px] h-[14px] rounded-[3px] border border-[#ccc] bg-[#efefef]"></span>':'<span class="w-[14px] h-[14px] rounded-[3px] border border-[#999] bg-white"></span>';
document.getElementById('layers').innerHTML=L.map(([n,l,a,b])=>`<div class="grid grid-cols-[131px_63px_63px] w-[257px] h-[21px] border-b border-[#ddd]">
<span class="border-r border-[#ddd] flex items-center whitespace-nowrap ${l==0?'pl-[2px]':l==1?'pl-[12px]':'pl-[20px]'}">${l==2?'<span class="w-[15px] h-px bg-[#ccc] mr-[6px]"></span>':`<span class="w-[13px] h-[13px] rounded-[2px] border border-[#888] flex items-center justify-center mr-[6px] ${l==0?'bg-[#eee]':''}"><span class="w-[6px] h-px bg-[#333]"></span></span>`}${n}</span>
<span class="border-r border-[#ddd] flex items-center justify-center">${cb(a)}</span><span class="border-r border-[#ddd] flex items-center justify-center">${cb(b)}</span></div>`).join('');
</script>
</body></html>
